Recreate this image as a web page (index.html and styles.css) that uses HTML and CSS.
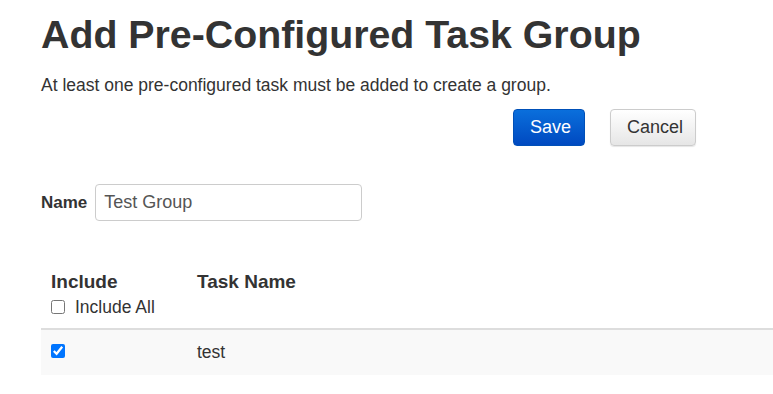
FILE: index.html
```html
<!DOCTYPE html>
<html lang="en">
<head>
<meta charset="UTF-8">
<meta name="viewport" content="width=device-width, initial-scale=1.0">
<title>Add Pre-Configured Task Group</title>
<link rel="stylesheet" href="styles.css">
</head>
<body>

<div class="container">

  <h1>Add Pre-Configured Task Group</h1>
  <p class="intro">At least one pre-configured task must be added to create a group.</p>

  <div class="actions">
    <button type="button" class="btn btn-primary">Save</button>
    <button type="button" class="btn btn-default">Cancel</button>
  </div>

  <form class="name-form">
    <label for="groupName">Name</label>
    <input type="text" id="groupName" name="groupName" value="Test Group">
  </form>

  <table class="task-table">
    <thead>
      <tr>
        <th class="col-include">
          Include
          <label class="include-all"><input type="checkbox"> Include All</label>
        </th>
        <th>Task Name</th>
      </tr>
    </thead>
    <tbody>
      <tr>
        <td><input type="checkbox" checked></td>
        <td>test</td>
      </tr>
    </tbody>
  </table>

</div>

</body>
</html>
```

FILE: styles.css
```css
body {
  font-family: "Liberation Sans", Arial, sans-serif;
  color: #333;
  background-color: #fff;
  margin: 0;
  padding: 0;
}

.container {
  padding: 0 0 0 41px;
  overflow: hidden;
}

h1 {
  font-size: 39.3px;
  font-weight: bold;
  margin: 12px 0 0;
  line-height: 44px;
}

.intro {
  font-size: 17.5px;
  margin: 18px 0 0;
  line-height: 22px;
}

.actions {
  display: flex;
  gap: 25px;
  margin: 13px 0 0 472px;
}

.btn {
  font-family: "Liberation Sans", Arial, sans-serif;
  font-size: 18px;
  height: 37px;
  padding: 0 16px;
  border-radius: 4px;
  cursor: pointer;
}

.btn-primary {
  width: 72px;
  color: #fff;
  background: linear-gradient(#0a6fdc, #0049c0);
  border: 1px solid #0050b8;
}

.btn-default {
  width: 86px;
  color: #333;
  background: linear-gradient(#fff, #e6e6e6);
  border: 1px solid #ccc;
  box-shadow: 0 1px 1px rgba(0, 0, 0, 0.1);
}

.name-form {
  display: flex;
  align-items: center;
  gap: 8px;
  margin-top: 38px;
}

.name-form label {
  font-weight: bold;
  font-size: 17px;
}

.name-form input {
  width: 267px;
  height: 37px;
  box-sizing: border-box;
  border: 1px solid #ccc;
  border-radius: 4px;
  padding: 0 8px;
  font-family: "Liberation Sans", Arial, sans-serif;
  font-size: 18px;
  color: #555;
}

.task-table {
  width: 800px;
  border-collapse: collapse;
  margin-top: 47px;
}

.task-table th {
  text-align: left;
  vertical-align: top;
  font-size: 19px;
  font-weight: bold;
  padding: 2px 10px 9px;
  border-bottom: 2px solid #ddd;
  line-height: 24px;
}

.col-include {
  width: 126px;
}

.include-all {
  display: flex;
  align-items: center;
  gap: 10px;
  font-size: 17.5px;
  font-weight: normal;
  margin-top: 1px;
}

.include-all input,
.task-table td input {
  width: 14px;
  height: 14px;
  margin: 0;
}

.task-table td {
  background-color: #f9f9f9;
  font-size: 17.5px;
  padding: 0 10px;
  height: 45px;
  vertical-align: middle;
}
```
